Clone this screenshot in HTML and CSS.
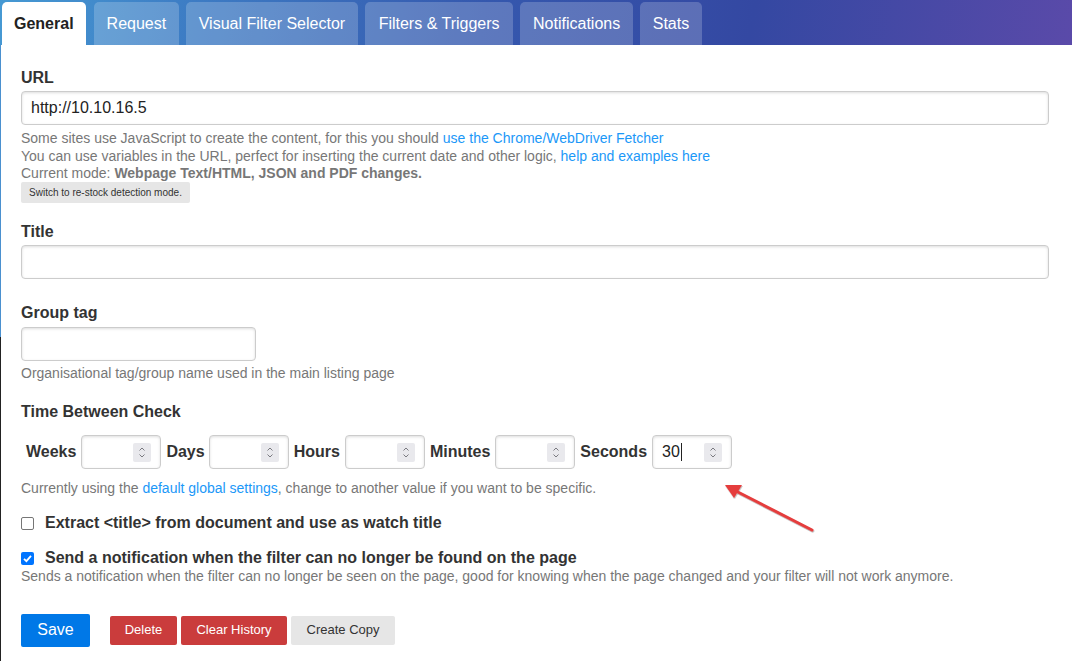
FILE: index.html
```html
<!DOCTYPE html>
<html>
<head>
<meta charset="utf-8">
<title>Edit watch</title>
<link rel="stylesheet" href="styles.css">
</head>
<body>
<div class="page">
  <nav class="tabs">
    <a class="tab active">General</a>
    <a class="tab">Request</a>
    <a class="tab">Visual Filter Selector</a>
    <a class="tab tab-ft">Filters &amp; Triggers</a>
    <a class="tab">Notifications</a>
    <a class="tab">Stats</a>
  </nav>
  <form class="content">
    <div class="group">
      <label class="label">URL</label>
      <div class="input wide">http://10.10.16.5</div>
      <div class="help url-help">
        <div>Some sites use JavaScript to create the content, for this you should <a class="link">use the Chrome/WebDriver Fetcher</a></div>
        <div>You can use variables in the URL, perfect for inserting the current date and other logic, <a class="link">help and examples here</a></div>
        <div>Current mode: <strong>Webpage Text/HTML, JSON and PDF changes.</strong></div>
      </div>
      <button type="button" class="btn-mini">Switch to re-stock detection mode.</button>
    </div>
    <div class="group g-title">
      <label class="label">Title</label>
      <div class="input wide"></div>
    </div>
    <div class="group g-tag">
      <label class="label">Group tag</label>
      <div class="input narrow"></div>
      <div class="help tag-help">Organisational tag/group name used in the main listing page</div>
    </div>
    <div class="group g-time">
      <label class="label">Time Between Check</label>
      <div class="time-row">
        <span class="tlabel">Weeks</span>
        <div class="input num"><span class="val"></span><span class="spin"><svg viewBox="0 0 18 19" width="18" height="19"><path d="M6.5 7.5 9 5 11.5 7.5M6.5 11.5 9 14 11.5 11.5" fill="none" stroke="#7a7a80" stroke-width="1"/></svg></span></div>
        <span class="tlabel days">Days</span>
        <div class="input num"><span class="val"></span><span class="spin"><svg viewBox="0 0 18 19" width="18" height="19"><path d="M6.5 7.5 9 5 11.5 7.5M6.5 11.5 9 14 11.5 11.5" fill="none" stroke="#7a7a80" stroke-width="1"/></svg></span></div>
        <span class="tlabel">Hours</span>
        <div class="input num"><span class="val"></span><span class="spin"><svg viewBox="0 0 18 19" width="18" height="19"><path d="M6.5 7.5 9 5 11.5 7.5M6.5 11.5 9 14 11.5 11.5" fill="none" stroke="#7a7a80" stroke-width="1"/></svg></span></div>
        <span class="tlabel">Minutes</span>
        <div class="input num"><span class="val"></span><span class="spin"><svg viewBox="0 0 18 19" width="18" height="19"><path d="M6.5 7.5 9 5 11.5 7.5M6.5 11.5 9 14 11.5 11.5" fill="none" stroke="#7a7a80" stroke-width="1"/></svg></span></div>
        <span class="tlabel">Seconds</span>
        <div class="input num"><span class="val">30<span class="caret"></span></span><span class="spin"><svg viewBox="0 0 18 19" width="18" height="19"><path d="M6.5 7.5 9 5 11.5 7.5M6.5 11.5 9 14 11.5 11.5" fill="none" stroke="#7a7a80" stroke-width="1"/></svg></span></div>
      </div>
      <div class="help">Currently using the <a class="link">default global settings</a>, change to another value if you want to be specific.</div>
    </div>
    <div class="check-row c1">
      <span class="box"></span>
      <span class="clabel">Extract &lt;title&gt; from document and use as watch title</span>
    </div>
    <div class="check-row c2">
      <span class="box checked"><svg viewBox="0 0 13 13" width="13" height="13"><path d="M3 6.8 5.4 9.2 10 3.8" fill="none" stroke="#fff" stroke-width="1.8"/></svg></span>
      <span class="clabel">Send a notification when the filter can no longer be found on the page</span>
    </div>
    <div class="help notif-help">Sends a notification when the filter can no longer be seen on the page, good for knowing when the page changed and your filter will not work anymore.</div>
    <div class="actions">
      <button type="button" class="btn btn-save">Save</button>
      <div class="small-btns">
        <button type="button" class="btn btn-sm btn-red btn-del">Delete</button>
        <button type="button" class="btn btn-sm btn-red btn-clear">Clear History</button>
        <button type="button" class="btn btn-sm btn-grey">Create Copy</button>
      </div>
    </div>
  </form>
  <svg class="arrow" width="110" height="60" viewBox="0 0 110 60">
    <defs>
      <filter id="sh" x="-20%" y="-20%" width="140%" height="140%"><feDropShadow dx="0.5" dy="1" stdDeviation="0.6" flood-color="#000" flood-opacity="0.35"/></filter>
    </defs>
    <g filter="url(#sh)">
      <line x1="92" y1="49" x2="12" y2="8" stroke="#e53e3e" stroke-width="3" stroke-linecap="round"/>
      <path d="M5 4 L22 4 L14 17 Z" fill="#e53e3e"/>
    </g>
  </svg>
</div>
</body>
</html>
```

FILE: styles.css
```css
* { box-sizing: border-box; }
html, body { margin: 0; padding: 0; background: #fff; }
body {
  font-family: "Liberation Sans", Arial, Helvetica, sans-serif;
  color: #333;
  font-size: 16px;
}
.page {
  position: relative;
  min-height: 661px;
  background:
    linear-gradient(#4a90cf, #4a90cf) 0 0 / 1px 337px no-repeat,
    linear-gradient(#222, #222) 0 337px / 1px 100% no-repeat,
    #fff;
}
.tabs {
  display: flex;
  align-items: flex-end;
  height: 45px;
  padding: 0 0 0 2px;
  gap: 7px;
  background: linear-gradient(100deg, #4699d3 0%, #3d7cc4 18%, #3558ae 45%, #3448a2 70%, #5a4aa9 100%);
}
.tab {
  display: flex;
  align-items: center;
  height: 43px;
  padding: 0 12.5px 0 13px;
  border-radius: 5px 5px 0 0;
  background: rgba(255, 255, 255, 0.2);
  color: #fff;
  font-size: 16px;
  text-decoration: none;
}
.tab.tab-ft { padding: 0 13.5px 0 14px; }
.tab.active {
  background: #fff;
  color: #222;
  font-weight: bold;
  padding: 0 12px 0 12px;
  margin-right: 1px;
}
.content {
  display: block;
  padding: 23px 23px 0 21px;
}
.group { display: block; }
.label {
  display: block;
  font-weight: bold;
  font-size: 16px;
  line-height: 20px;
  color: #333;
  margin-bottom: 3px;
}
.input {
  display: flex;
  align-items: center;
  height: 34px;
  border: 1px solid #ccc;
  border-radius: 4px;
  box-shadow: inset 0 1px 3px #ddd;
  background: #fff;
  font-size: 16px;
  color: #222;
  padding: 0 9px;
}
.input.wide { width: 100%; }
.input.narrow { width: 235px; }
.help {
  font-size: 14px;
  line-height: 17.5px;
  color: #777;
}
.url-help { margin-top: 5px; }
.tag-help { margin-top: 4px; }
.help strong { font-weight: bold; color: #777; }
.link { color: #1b98f8; text-decoration: none; }
.btn-mini {
  display: block;
  margin-top: -1px;
  height: 21px;
  width: 169px;
  padding: 0;
  border: none;
  border-radius: 2px;
  background: #e6e6e6;
  color: #333;
  font-family: "Liberation Sans", Arial, sans-serif;
  font-size: 10px;
}
.g-title { margin-top: 19px; }
.g-tag { margin-top: 24px; }
.g-tag .label { margin-bottom: 4px; }
.g-time { margin-top: 20px; }
.g-time .label { margin-bottom: 13px; }
.time-row {
  display: flex;
  align-items: center;
  margin-bottom: 11px;
}
.tlabel {
  padding: 0 5px;
  font-weight: bold;
  font-size: 16px;
  color: #333;
}
.tlabel.days { padding-right: 4px; }
.input.num {
  width: 80px;
  height: 34px;
  justify-content: space-between;
  padding: 0 9px 0 9px;
}
.val {
  display: flex;
  align-items: center;
  font-size: 16px;
  color: #222;
}
.caret {
  display: inline-block;
  width: 1px;
  height: 18px;
  background: #222;
  margin-left: 1px;
}
.spin {
  display: block;
  width: 18px;
  height: 19px;
  background: #e9e9ed;
  border-radius: 2px;
}
.spin svg { display: block; }
.check-row {
  display: flex;
  align-items: center;
  height: 20px;
}
.c1 { margin-top: 15px; }
.c2 { margin-top: 15px; }
.box {
  display: block;
  width: 13px;
  height: 13px;
  border: 1px solid #767676;
  border-radius: 2px;
  margin-right: 11px;
  background: #fff;
  position: relative;
  top: 1px;
}
.box.checked {
  border: none;
  background: #0075ff;
}
.box svg { display: block; }
.clabel {
  font-weight: bold;
  font-size: 16px;
  color: #333;
}
.notif-help { margin-top: 0; }
.actions {
  display: flex;
  align-items: center;
  gap: 20px;
  margin-top: 29px;
}
.small-btns { display: flex; gap: 4px; }
.btn {
  border: none;
  font-family: "Liberation Sans", Arial, sans-serif;
  cursor: pointer;
  border-radius: 2px;
  line-height: 1.15;
}
.btn-save {
  height: 33px;
  width: 69px;
  background: #0078e7;
  color: #fff;
  font-size: 16px;
}
.btn-sm {
  height: 29px;
  font-size: 13px;
  padding: 0;
}
.btn-red { background: #ca3c3c; color: #fff; }
.btn-del { width: 67px; }
.btn-clear { width: 106px; }
.btn-grey { background: #e6e6e6; color: #333; width: 104px; }
.arrow {
  position: absolute;
  left: 720px;
  top: 481px;
}
```
